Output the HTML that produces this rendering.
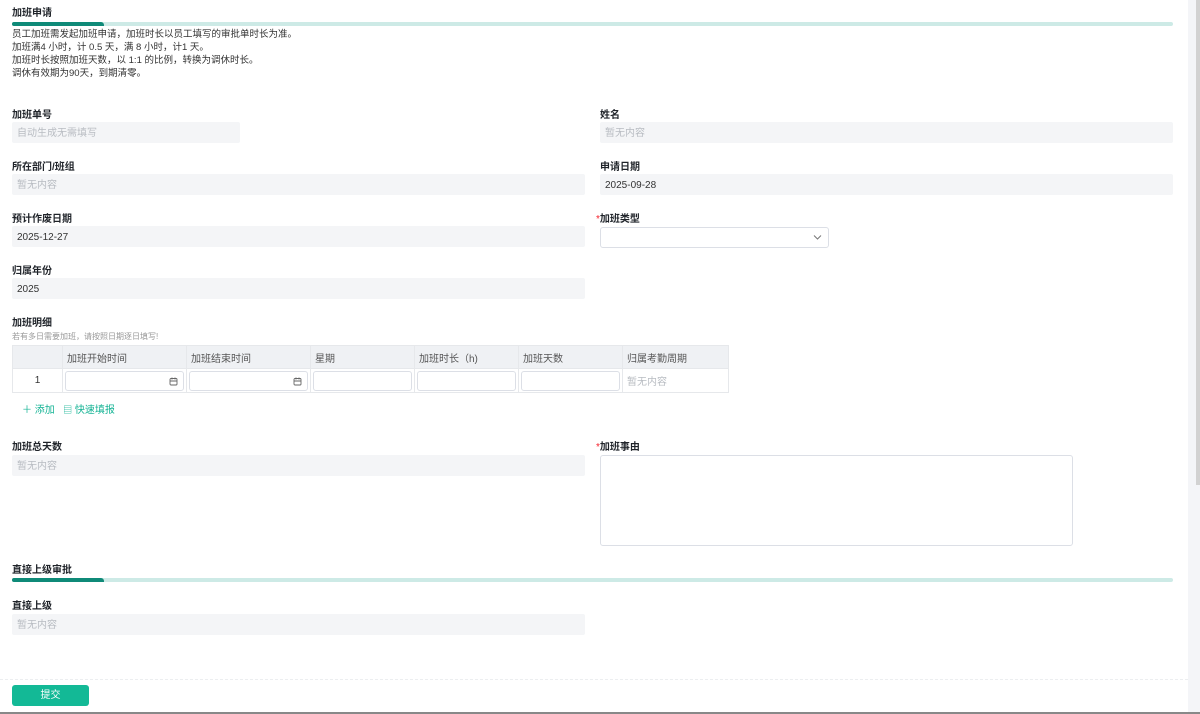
<!DOCTYPE html>
<html><head><meta charset="utf-8"><style>
*{box-sizing:border-box;margin:0;padding:0}
body{width:1200px;height:714px;overflow:hidden;background:#fff;font-family:"Liberation Sans","Noto Sans CJK SC",sans-serif;font-size:10px;color:#333;position:relative}
.a{position:absolute}
.lbl{position:absolute;font-weight:bold;font-size:10px;color:#1f2329}
.fld{position:absolute;height:21px;background:#f4f5f7;border-radius:2px;padding-left:5px;line-height:23px;font-size:10px;color:#333}
.ph{color:#b8bcc2}
.bar{position:absolute;left:12px;width:1161px;height:4px;background:#cdeae6;border-radius:2px}
.bar i{position:absolute;left:0;top:0;width:92px;height:4px;background:#0f8a78;border-radius:2px 3px 0 2px}
.star{color:#f5222d;font-weight:normal}
table{position:absolute;left:12px;top:345px;border-collapse:collapse;font-size:10px;color:#555}
td{border:1px solid #e6e8eb;height:24px;padding:0 2px}
th{border:1px solid #e6e8eb;height:23px;background:#eff1f4;font-weight:normal;text-align:left;padding-left:4px;color:#555}
.in{height:20px;border:1px solid #dcdfe6;border-radius:3px;background:#fff;position:relative}
</style></head><body>
<div class="lbl" style="left:12px;top:4px">加班申请</div>
<div class="bar" style="top:22px"><i></i></div>
<div class="a" style="left:12px;top:28px;font-size:9.5px;line-height:13px;color:#333">员工加班需发起加班申请，加班时长以员工填写的审批单时长为准。<br>加班满4 小时，计 0.5 天，满 8 小时，计1 天。<br>加班时长按照加班天数，以 1:1 的比例，转换为调休时长。<br>调休有效期为90天，到期清零。</div>

<div class="lbl" style="left:12px;top:106px">加班单号</div>
<div class="fld ph" style="left:12px;top:122px;width:228px">自动生成无需填写</div>
<div class="lbl" style="left:600px;top:106px">姓名</div>
<div class="fld ph" style="left:600px;top:122px;width:573px">暂无内容</div>

<div class="lbl" style="left:12px;top:158px">所在部门/班组</div>
<div class="fld ph" style="left:12px;top:174px;width:573px">暂无内容</div>
<div class="lbl" style="left:600px;top:158px">申请日期</div>
<div class="fld" style="left:600px;top:174px;width:573px">2025-09-28</div>

<div class="lbl" style="left:12px;top:210px">预计作废日期</div>
<div class="fld" style="left:12px;top:226px;width:573px">2025-12-27</div>
<div class="lbl" style="left:596px;top:210px"><span class="star">*</span>加班类型</div>
<div class="a" style="left:600px;top:227px;width:229px;height:21px;border:1px solid #dcdfe6;border-radius:3px">
<svg class="a" style="right:6px;top:6px" width="9" height="7" viewBox="0 0 9 7"><path d="M1 1.5L4.5 5 8 1.5" fill="none" stroke="#777" stroke-width="1"/></svg></div>

<div class="lbl" style="left:12px;top:262px">归属年份</div>
<div class="fld" style="left:12px;top:278px;width:573px">2025</div>

<div class="lbl" style="left:12px;top:314px">加班明细</div>
<div class="a" style="left:12px;top:331px;font-size:8px;color:#999">若有多日需要加班，请按照日期逐日填写!</div>
<table>
<tr><th style="width:50px"></th><th style="width:124px">加班开始时间</th><th style="width:124px">加班结束时间</th><th style="width:104px">星期</th><th style="width:104px">加班时长（h)</th><th style="width:104px">加班天数</th><th style="width:106px">归属考勤周期</th></tr>
<tr><td style="text-align:center;color:#333">1</td>
<td><div class="in"><svg class="a" style="right:5px;top:5px" width="9" height="9" viewBox="0 0 9 9"><rect x="1" y="1.5" width="7" height="6.5" rx="1" fill="none" stroke="#666" stroke-width=".9"/><path d="M1 4h7M3 .5v2M6 .5v2" stroke="#666" stroke-width=".9"/></svg></div></td>
<td><div class="in"><svg class="a" style="right:5px;top:5px" width="9" height="9" viewBox="0 0 9 9"><rect x="1" y="1.5" width="7" height="6.5" rx="1" fill="none" stroke="#666" stroke-width=".9"/><path d="M1 4h7M3 .5v2M6 .5v2" stroke="#666" stroke-width=".9"/></svg></div></td>
<td><div class="in"></div></td><td><div class="in"></div></td><td><div class="in"></div></td>
<td style="color:#b8bcc2;padding-left:4px">暂无内容</td></tr>
</table>
<div class="a" style="left:22px;top:401px;color:#14b394;font-size:10px">＋ 添加 &nbsp;&nbsp;<span style="font-size:9px">▤</span> 快速填报</div>

<div class="lbl" style="left:12px;top:438px">加班总天数</div>
<div class="fld ph" style="left:12px;top:455px;width:573px">暂无内容</div>
<div class="lbl" style="left:596px;top:438px"><span class="star">*</span>加班事由</div>
<div class="a" style="left:600px;top:455px;width:473px;height:91px;border:1px solid #dcdfe6;border-radius:3px"></div>

<div class="lbl" style="left:12px;top:561px">直接上级审批</div>
<div class="bar" style="top:578px"><i></i></div>
<div class="lbl" style="left:12px;top:597px">直接上级</div>
<div class="fld ph" style="left:12px;top:614px;width:573px">暂无内容</div>

<div class="a" style="left:0;top:679px;width:1188px;border-top:1px dashed #eceef0"></div>
<div class="a" style="left:12px;top:685px;width:77px;height:21px;background:#13b996;border-radius:3px;color:#fff;text-align:center;line-height:21px;font-size:10px">提交</div>
<div class="a" style="left:0;top:712px;width:1200px;height:2px;background:#888"></div>
<div class="a" style="left:1188px;top:0;width:12px;height:712px;background:#f4f5f8"></div>
<div class="a" style="left:1196px;top:0;width:4px;height:485px;background:#d2d2d2"></div>
</body></html>
